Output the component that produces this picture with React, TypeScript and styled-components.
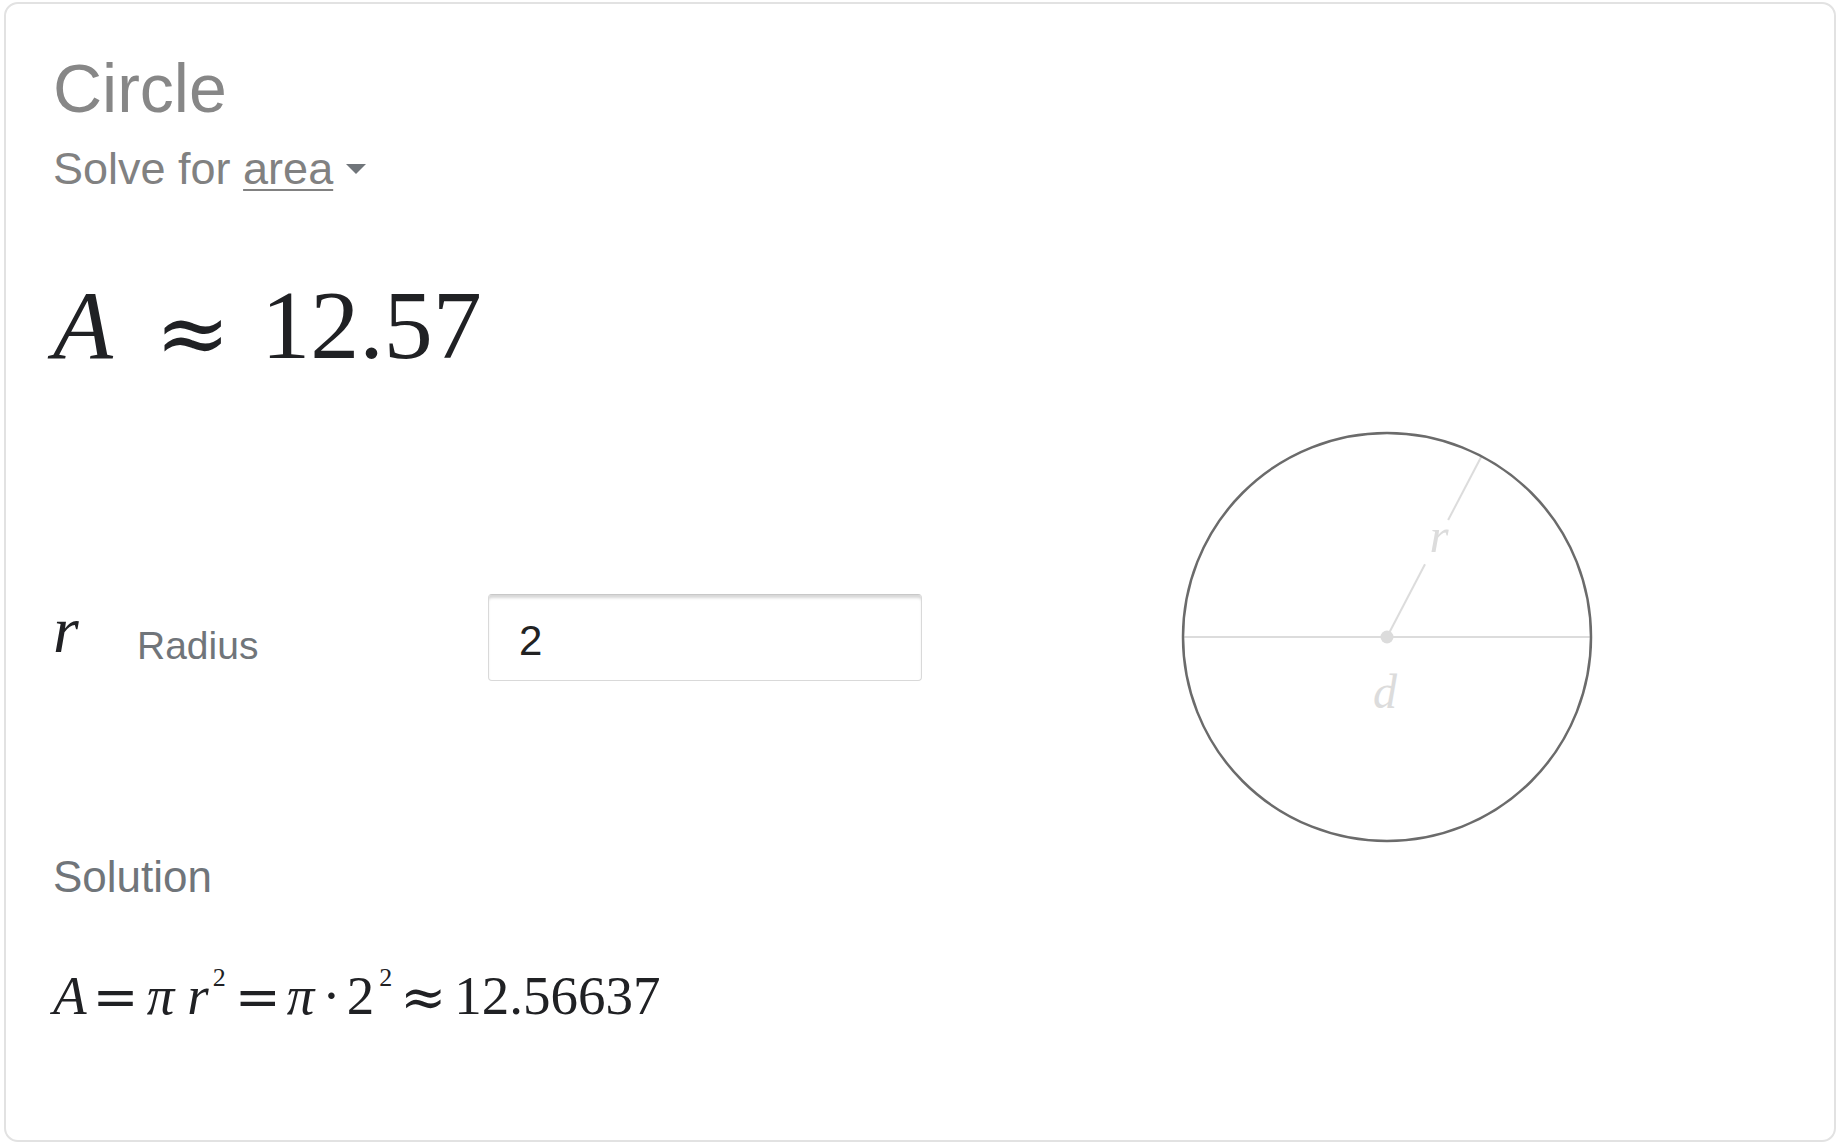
import { FC } from 'react'
import styled, { createGlobalStyle } from 'styled-components'

const GlobalStyle = createGlobalStyle`
  html, body {
    margin: 0;
    padding: 0;
    background: #fff;
  }
  body {
    font-family: "Liberation Sans", Arial, sans-serif;
  }
`

const Page = styled.div`
  padding: 2px 5px 2px 4px;
`

const Card = styled.div`
  border: 2px solid #e2e2e2;
  border-radius: 14px;
  padding: 44px 47px 114px 47px;
  background: #fff;
`

const Title = styled.div`
  font-size: 68px;
  line-height: 80px;
  color: #878787;
`

const SolveFor = styled.div`
  margin-top: 14px;
  font-size: 45px;
  line-height: 54px;
  color: #818181;
  white-space: nowrap;
`

const Target = styled.span`
  text-decoration: underline;
  text-decoration-thickness: 2px;
  text-underline-offset: 5px;
`

const Caret = styled.span`
  display: inline-block;
  margin-left: 13px;
  margin-bottom: 10px;
  width: 0;
  height: 0;
  border-left: 10px solid transparent;
  border-right: 10px solid transparent;
  border-top: 10px solid #70757a;
`

const Result = styled.div`
  margin-top: 74px;
  height: 110px;
  font-family: "Liberation Serif", "Times New Roman", serif;
  font-size: 98px;
  line-height: 110px;
  color: #202124;
  white-space: nowrap;
`

const Equation = styled.div`
  margin-top: 64px;
  height: 60px;
  font-family: "Liberation Serif", "Times New Roman", serif;
  font-size: 55px;
  line-height: 60px;
  color: #202124;
  white-space: nowrap;
`

// one symbol of a formula; $gap is the math spacing before it
const Tok = styled.span<{ $gap?: number; $italic?: boolean; $op?: boolean; $size?: number; $shift?: number }>`
  margin-left: ${(p) => p.$gap ?? 0}px;
  font-style: ${(p) => (p.$italic ? 'italic' : 'normal')};
  font-family: ${(p) => (p.$op ? '"DejaVu Serif", serif' : '"Liberation Serif", "Times New Roman", serif')};
  ${(p) => (p.$size ? `font-size: ${p.$size}px;` : '')}
  line-height: 0;
  vertical-align: ${(p) => p.$shift ?? 0}px;
`

const Sup = styled.span<{ $gap?: number }>`
  margin-left: ${(p) => p.$gap ?? 0}px;
  font-size: 26px;
  line-height: 0;
  vertical-align: 28px;
`

const Section = styled.div`
  margin-top: 45px;
  height: 424px;
  padding-bottom: 3px;
  display: flex;
  align-items: center;
`

const Fields = styled.div`
  display: grid;
  grid-template-columns: 84px 351px 434px;
  align-items: start;
`

const VarName = styled.div`
  padding-top: 4px;
  font-family: "Liberation Serif", "Times New Roman", serif;
  font-style: italic;
  font-size: 66px;
  line-height: 64px;
  color: #202124;
`

const FieldLabel = styled.div`
  padding-top: 32px;
  font-size: 39px;
  line-height: 40px;
  color: #70757a;
`

const ValueInput = styled.input`
  box-sizing: border-box;
  width: 434px;
  height: 87px;
  margin: 0;
  padding: 7px 30px 0;
  border: 1px solid #d9d9d9;
  border-top-color: #c8c8c8;
  border-radius: 4px;
  box-shadow: inset 0 4px 3px -1px rgba(0, 0, 0, 0.16);
  font-family: "Liberation Sans", Arial, sans-serif;
  font-size: 42px;
  color: #222;
  outline: none;
  background: #fff;
`

const Diagram = styled.svg`
  display: block;
  flex: none;
  margin-left: 253px;
`

const SectionHead = styled.div`
  margin-top: 0;
  font-size: 44px;
  line-height: 50px;
  color: #70757a;
`

const CircleDiagram: FC = () => {
  const c = 212
  const rad = 204
  const ang = (62.4 * Math.PI) / 180
  const ux = Math.cos(ang)
  const uy = -Math.sin(ang)
  const at = (d: number) => [c + ux * d, c + uy * d]
  const [ax, ay] = at(82)
  const [bx, by] = at(132)
  const [ex, ey] = at(rad)
  return (
    <Diagram width={424} height={424} viewBox="0 0 424 424">
      <line x1={c - rad} y1={c} x2={c + rad} y2={c} stroke="#dcdcdc" strokeWidth={2} />
      <line x1={c} y1={c} x2={ax} y2={ay} stroke="#dcdcdc" strokeWidth={2} />
      <line x1={bx} y1={by} x2={ex} y2={ey} stroke="#dcdcdc" strokeWidth={2} />
      <circle cx={c} cy={c} r={6.5} fill="#dcdcdc" />
      <circle cx={c} cy={c} r={rad} fill="none" stroke="#6b6b6b" strokeWidth={2.5} />
      <text
        x={264}
        y={127}
        textAnchor="middle"
        fontFamily='"Liberation Serif", serif'
        fontStyle="italic"
        fontSize={49}
        fill="#dcdcdc"
      >
        r
      </text>
      <text
        x={210}
        y={283}
        textAnchor="middle"
        fontFamily='"Liberation Serif", serif'
        fontStyle="italic"
        fontSize={48}
        fill="#dcdcdc"
      >
        d
      </text>
    </Diagram>
  )
}

const App: FC = () => {
  return (
    <Page>
      <GlobalStyle />
      <Card>
        <Title>Circle</Title>
        <SolveFor>
          Solve for <Target>area</Target>
          <Caret />
        </SolveFor>

        <Result>
          <Tok $italic>A</Tok>
          <Tok $op $gap={42} $size={90} $shift={-6}>≈</Tok>
          <Tok $gap={31}>12.57</Tok>
        </Result>

        <Section>
          <Fields>
            <VarName>r</VarName>
            <FieldLabel>Radius</FieldLabel>
            <ValueInput defaultValue="2" />
          </Fields>
          <CircleDiagram />
        </Section>

        <SectionHead>Solution</SectionHead>
        <Equation>
          <Tok $italic>A</Tok>
          <Tok $op $gap={6} $shift={-2}>=</Tok>
          <Tok $italic $gap={8}>π</Tok>
          <Tok $italic $gap={13}>r</Tok>
          <Sup $gap={4}>2</Sup>
          <Tok $op $gap={9} $shift={-2}>=</Tok>
          <Tok $italic $gap={6}>π</Tok>
          <Tok $gap={8}>·</Tok>
          <Tok $gap={6}>2</Tok>
          <Sup $gap={5}>2</Sup>
          <Tok $op $gap={8} $shift={-2}>≈</Tok>
          <Tok $gap={8}>12.56637</Tok>
        </Equation>
      </Card>
    </Page>
  )
}

export default App
